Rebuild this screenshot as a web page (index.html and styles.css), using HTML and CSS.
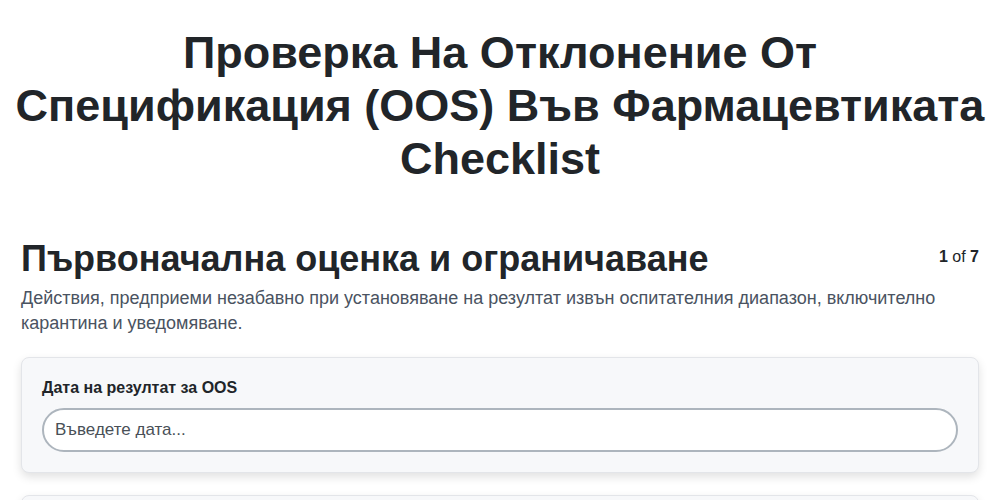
FILE: index.html
```html
<!DOCTYPE html>
<html lang="bg">
<head>
<meta charset="utf-8">
<title>OOS Checklist</title>
<link rel="stylesheet" href="styles.css">
</head>
<body>
<div class="page">
  <h1 class="title">Проверка На Отклонение От Спецификация (OOS) Във Фармацевтиката Checklist</h1>
  <section class="section">
    <div class="section-head">
      <h2 class="section-title">Първоначална оценка и ограничаване</h2>
      <div class="progress"><b>1</b> of <b>7</b></div>
    </div>
    <p class="section-desc">Действия, предприеми незабавно при установяване на резултат извън оспитателния диапазон, включително карантина и уведомяване.</p>
    <div class="card">
      <label class="field-label" for="d1">Дата на резултат за OOS</label>
      <input class="field-input" id="d1" type="text" placeholder="Въведете дата...">
    </div>
    <div class="card">
      <label class="field-label" for="d2">Номер на партида</label>
      <input class="field-input" id="d2" type="text" placeholder="Въведете номер...">
    </div>
  </section>
</div>
</body>
</html>
```
FILE: styles.css
```css
* { box-sizing: border-box; }
body {
  margin: 0;
  font-family: "Liberation Sans", Arial, sans-serif;
  color: #212529;
  background: #ffffff;
}
.page {
  padding: 26px 21px 0;
}
.title {
  margin: 0 -12px 52px;
  text-align: center;
  font-size: 45px;
  line-height: 53px;
  font-weight: 700;
  color: #212529;
}
.section-head {
  display: flex;
  justify-content: space-between;
  align-items: flex-start;
}
.section-title {
  margin: 0;
  font-size: 36px;
  line-height: 1.2;
  font-weight: 700;
}
.progress {
  font-size: 16px;
  padding-top: 11px;
  color: #212529;
}
.section-desc {
  margin: 6px 0 21px;
  font-size: 18px;
  line-height: 25px;
  color: #4a5361;
}
.card {
  background: #f7f8fa;
  border: 1px solid #e3e5e9;
  border-radius: 8px;
  box-shadow: 0 4px 10px rgba(0, 0, 0, 0.12);
  padding: 20px 20px 20px;
  margin-bottom: 22px;
}
.field-label {
  display: block;
  font-size: 16px;
  line-height: 19px;
  font-weight: 700;
  margin-bottom: 11px;
  color: #212529;
}
.field-input {
  display: block;
  width: 100%;
  height: 44px;
  border: 2px solid #adb5bd;
  border-radius: 22px;
  background: #fff;
  padding: 0 11px;
  font-family: "Liberation Sans", Arial, sans-serif;
  font-size: 17px;
  color: #495057;
}
.field-input::placeholder { color: #495057; }
```
